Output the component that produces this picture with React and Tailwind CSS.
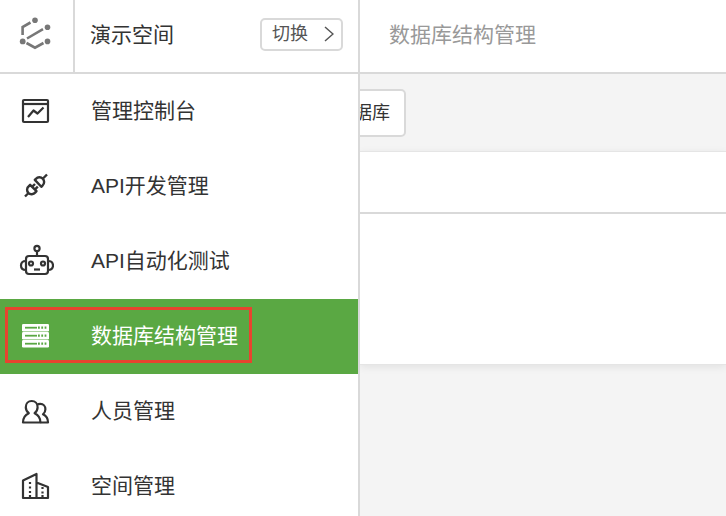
const iconProps = {
  viewBox: '0 0 36 36',
  fill: 'none',
  stroke: 'currentColor',
  strokeWidth: 2.2,
  strokeLinejoin: 'round',
  className: 'w-9 h-9',
  'aria-hidden': true,
};

const Logo = () => (
  <svg viewBox="0 0 36 36" className="w-9 h-9 text-[#777777]" fill="none" stroke="currentColor" strokeWidth="2.6" aria-hidden="true">
    <path d="M5.6 19V11L13.5 6.5M10 22.5L26 13.2M9.5 27L18 31.7L26.5 27" />
    <g fill="currentColor" stroke="none">
      <circle cx="18" cy="4.3" r="2.8" />
      <circle cx="30.5" cy="11.3" r="2.8" />
      <circle cx="5.7" cy="25.4" r="2.9" />
      <circle cx="30.5" cy="25.4" r="2.8" />
    </g>
  </svg>
);

const ConsoleIcon = () => (
  <svg {...iconProps}>
    <rect x="5" y="7" width="25" height="22" rx="1" />
    <path d="M5 11H30" />
    <path d="M10 24L15.5 17.5L19.5 20.5L25.5 14.5" />
  </svg>
);

const PlugIcon = () => (
  <svg {...iconProps} strokeWidth={2.4}>
    <path d="M7 28.5L10.5 25M10.8 18.2C8.6 20 8.6 23 10.3 24.9C12.2 26.8 15.5 26.6 17.4 24.4L18.5 23.2L12.1 16.8Z" />
    <path d="M14.3 18.7L17 16M17 21.4L19.8 18.7" />
    <path d="M29 6.5L25 10.5M24.7 10.6C22.8 8.7 19.8 8.9 17.9 10.8L16.8 11.9L23.3 18.8L24.5 17.6C26.7 15.6 26.6 12.5 24.7 10.6Z" />
  </svg>
);

const RobotIcon = () => (
  <svg {...iconProps}>
    <circle cx="19" cy="5.5" r="2.6" />
    <path d="M19 8V13" />
    <rect x="8" y="13" width="22" height="18" rx="3" />
    <path d="M8 18C4.8 18 3 20 3 22.5S4.8 27 8 27M30 18C33.2 18 35 20 35 22.5S33.2 27 30 27" />
    <circle cx="13" cy="20.5" r="2" />
    <circle cx="25" cy="20.5" r="2" />
    <path d="M16 26.5H22" />
  </svg>
);

const DatabaseIcon = () => (
  <svg viewBox="0 0 36 36" className="w-9 h-9" fill="currentColor" aria-hidden="true">
    {[6, 14, 22].map((y) => (
      <g key={y}>
        <rect x="4" y={y} width="27" height="7.4" rx="1.2" />
        <path d={`M7 ${y + 3.7}H19`} stroke="#5aa843" strokeWidth="1.8" />
        <path d={`M20 ${y + 3.7}H29`} stroke="#5aa843" strokeWidth="2.2" strokeDasharray="1.8 1.5" />
      </g>
    ))}
  </svg>
);

const PeopleIcon = () => (
  <svg {...iconProps}>
    <path d="M5 29.5C5 24.5 7.3 21.8 10.8 20.2C8.7 18.6 7.8 16.7 7.8 14.2C7.8 10.6 10.3 8 13.7 8S19.6 10.6 19.6 14.2C19.6 16.7 18.7 18.6 16.6 20.2C20.2 21.8 22.4 24.5 22.4 29.5Z" />
    <path d="M19 11.8C20 11.1 21.2 10.9 22.3 10.9C25.4 10.9 27.4 13.2 27.4 16.2C27.4 18.4 26.5 20 25 21.3C28.2 22.8 30 25.2 30 29.5H22.5" />
  </svg>
);

const BuildingIcon = () => (
  <svg {...iconProps}>
    <path d="M5 30V12.5L18.5 6V30ZM18.5 14.5L30 19V30H18.5" />
    <path d="M12 14V26M24.5 19V26" strokeDasharray="2 2.5" />
    <path d="M12 27V30M24.5 27V30" />
  </svg>
);

const menu = [
  { label: '管理控制台', icon: ConsoleIcon },
  { label: 'API开发管理', icon: PlugIcon },
  { label: 'API自动化测试', icon: RobotIcon },
  { label: '数据库结构管理', icon: DatabaseIcon, active: true },
  { label: '人员管理', icon: PeopleIcon },
  { label: '空间管理', icon: BuildingIcon },
];

const Sidebar = () => (
  <aside className="w-90 shrink-0 bg-white border-r-2 border-[#d9d9d9]">
    <div className="h-[74px] flex items-center border-b-2 border-[#d9d9d9]">
      <a href="#home" aria-label="首页" className="w-[75px] h-full shrink-0 flex items-center pl-[17px] pb-1 border-r-2 border-[#d9d9d9]">
        <Logo />
      </a>
      <span className="flex-1 pl-[15px] text-[21px] leading-8 pb-0.5">演示空间</span>
      <button className="mr-[15px] mb-1 h-[33px] w-[83px] flex items-center justify-between pl-[10px] pr-[7px] border-2 border-[#d9d9d9] rounded-[5px] text-lg leading-6 text-[#555555]">
        切换
        <svg viewBox="0 0 10 16" className="w-[10px] h-4" fill="none" stroke="currentColor" strokeWidth="1.5" aria-hidden="true">
          <path d="M1 1L9 8L1 15" />
        </svg>
      </button>
    </div>
    <nav>
      {menu.map(({ label, icon: Icon, active }) => (
        <a
          key={label}
          href="#menu"
          aria-current={active ? 'page' : undefined}
          className={`relative h-[75px] flex items-center gap-[37px] pl-[18px] pb-0.5 text-[21px] leading-8 ${
            active ? 'bg-[#5aa843] text-white' : 'text-[#333333]'
          }`}
        >
          <Icon />
          <span>{label}</span>
          {active && <span className="absolute left-[5px] top-2 w-[247px] h-14 border-3 border-[#e8432f]" />}
        </a>
      ))}
    </nav>
  </aside>
);

const App = () => {
  return (
    <div className="h-screen flex overflow-hidden bg-[#f4f4f4] text-[#333333] font-['Liberation_Sans','Noto_Sans_CJK_SC',sans-serif]">
      <Sidebar />

      <main className="flex-1 min-w-0 overflow-hidden">
        <header className="h-[74px] flex items-center pl-[29px] pb-0.5 bg-white border-b-2 border-[#d9d9d9]">
          <h1 className="text-[21px] leading-8 text-[#999999]">数据库结构管理</h1>
        </header>

        <div className="pt-[15px] pb-[14px]">
          <button className="-ml-[22px] h-12 px-[14px] block bg-white border-2 border-[#d9d9d9] rounded-[5px] text-lg leading-6">
            据库
          </button>
        </div>

        <section className="bg-white border-y border-[#e5e5e5] shadow-[0_2px_8px_rgba(0,0,0,0.08)]">
          <div className="h-[62px] border-b-2 border-[#d9d9d9]" />
          <div className="h-[150px]" />
        </section>
      </main>
    </div>
  );
};

export default App;
